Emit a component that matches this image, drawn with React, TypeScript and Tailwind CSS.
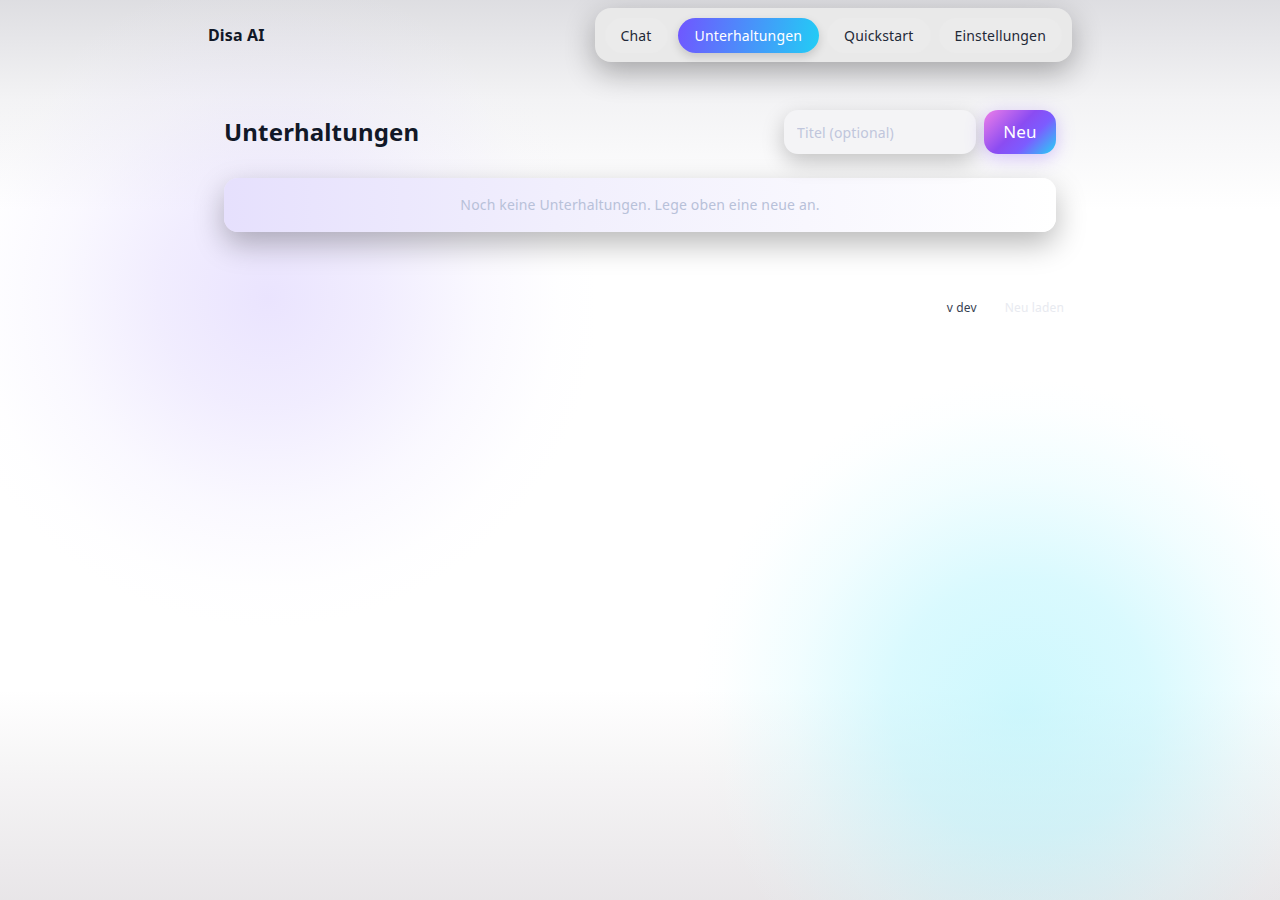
import React from "react";

export default function App() {
  return (
    <div className="relative min-h-[900px] w-full overflow-hidden bg-white font-['Noto_Sans',sans-serif] tracking-[0.01em] text-[#111827]">
      <div className="pointer-events-none absolute inset-0 bg-[linear-gradient(180deg,rgba(220,220,224,0.95)_0px,rgba(235,235,238,0.6)_100px,rgba(255,255,255,0)_210px,rgba(255,255,255,0)_690px,rgba(225,222,225,0.35)_780px,rgba(228,225,228,0.85)_900px)]" />
      <div className="pointer-events-none absolute inset-0 bg-[radial-gradient(circle_at_268px_298px,rgba(205,190,253,0.42)_0px,rgba(214,202,253,0.34)_110px,rgba(226,218,254,0.18)_210px,rgba(240,236,254,0.05)_290px,rgba(255,255,255,0)_330px),radial-gradient(circle_at_1022px_708px,rgba(175,243,252,0.62)_0px,rgba(180,244,253,0.5)_130px,rgba(200,248,254,0.25)_230px,rgba(220,250,254,0.06)_300px,rgba(255,255,255,0)_330px)]" />
      <div className="relative mx-auto w-[864px]">
        <header className="flex h-[70px] items-center justify-between">
          <div className="text-[16px] font-bold text-[#111827]">Disa AI</div>
          <nav className="flex h-[54px] items-center gap-[8px] rounded-[16px] bg-[#e9e9e9] px-[10px] shadow-[0_10px_30px_rgba(0,0,0,0.3)]">
            <a className="flex h-[35px] items-center rounded-full bg-[#ebebeb] px-[16px] text-[14px] text-[#1f2937]">Chat</a>
            <a className="ml-[2px] flex h-[35px] items-center rounded-full bg-[linear-gradient(100deg,#7056ff,#22cdf5)] px-[17px] text-[14px] text-white shadow-[0_4px_10px_rgba(0,0,0,0.15)]">Unterhaltungen</a>
            <a className="flex h-[35px] items-center rounded-full bg-[#ebebeb] px-[17px] text-[14px] text-[#1f2937]">Quickstart</a>
            <a className="flex h-[35px] items-center rounded-full bg-[#ebebeb] px-[16px] text-[14px] text-[#1f2937]">Einstellungen</a>
          </nav>
        </header>
        <main className="px-[16px] pt-[40px]">
          <div className="flex items-center justify-between">
            <h1 className="text-[24px] font-bold text-[#111827]">Unterhaltungen</h1>
            <div className="flex items-center gap-[8px]">
              <input
                placeholder="Titel (optional)"
                className="h-[44px] w-[192px] rounded-[14px] bg-[#f4f4f6] px-[13px] text-[14px] text-[#111827] outline-none shadow-[0_8px_22px_rgba(0,0,0,0.22)] placeholder:text-[#c0c6dc]"
              />
              <button className="h-[44px] w-[72px] rounded-[14px] bg-[linear-gradient(135deg,#ee7fe8_0%,#8b4cf2_45%,#7c5cff_65%,#25d3f5_100%)] text-[17px] font-normal text-white shadow-[0_4px_18px_rgba(139,92,246,0.35)]">
                Neu
              </button>
            </div>
          </div>
          <div className="mt-[24px] flex h-[54px] items-center justify-center rounded-[14px] bg-[linear-gradient(90deg,#e6e0fd_0%,#f1effd_40%,#ffffff_100%)] pb-[2px] text-[14px] text-[#b8c1d9] shadow-[0_12px_30px_rgba(0,0,0,0.28)]">
            Noch keine Unterhaltungen. Lege oben eine neue an.
          </div>
        </main>
        <footer className="mt-[67px] flex justify-end gap-[28px] pr-[8px] text-[12px]">
          <span className="text-[#374151]">v dev</span>
          <span className="text-[#e8eaf0]">Neu laden</span>
        </footer>
      </div>
    </div>
  );
}
